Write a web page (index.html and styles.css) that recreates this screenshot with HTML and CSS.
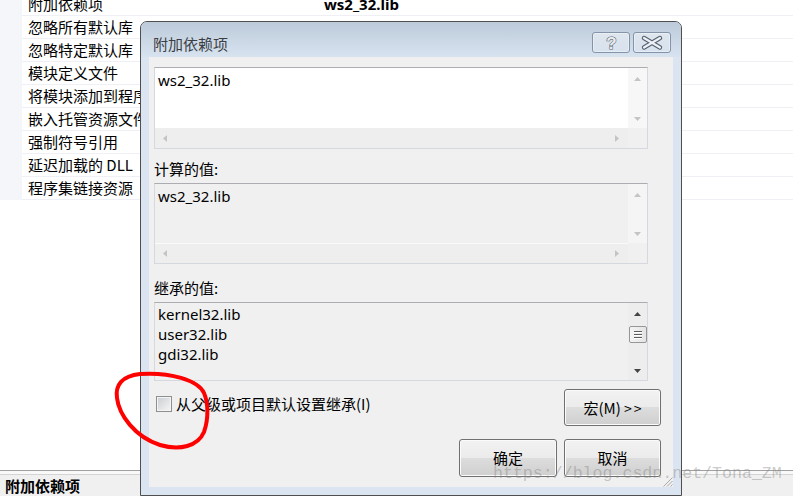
FILE: index.html
```html
<!DOCTYPE html>
<html>
<head>
<meta charset="utf-8">
<link rel="stylesheet" href="styles.css">
</head>
<body>
<div class="page">
  <div class="grid">
    <div class="row"><div class="gutter"></div><div class="name">附加依赖项</div><div class="value strong">ws2_32.lib</div></div>
    <div class="row"><div class="gutter"></div><div class="name">忽略所有默认库</div><div class="value"></div></div>
    <div class="row"><div class="gutter"></div><div class="name">忽略特定默认库</div><div class="value"></div></div>
    <div class="row"><div class="gutter"></div><div class="name">模块定义文件</div><div class="value"></div></div>
    <div class="row"><div class="gutter"></div><div class="name">将模块添加到程序集</div><div class="value"></div></div>
    <div class="row"><div class="gutter"></div><div class="name">嵌入托管资源文件</div><div class="value"></div></div>
    <div class="row"><div class="gutter"></div><div class="name">强制符号引用</div><div class="value"></div></div>
    <div class="row"><div class="gutter"></div><div class="name">延迟加载的 DLL</div><div class="value"></div></div>
    <div class="row"><div class="gutter"></div><div class="name">程序集链接资源</div><div class="value"></div></div>
  </div>
  <div class="blank"></div>
  <div class="footer">
    <div class="footer-sep"></div>
    <div class="footer-title">附加依赖项</div>
  </div>
</div>

<div class="dialog">
  <div class="titlebar">
    <div class="title">附加依赖项</div>
    <div class="tbtns">
      <div class="tbtn">
        <svg width="36" height="19" viewBox="0 0 36 19"><text x="18.5" y="16" text-anchor="middle" font-family="Liberation Sans, sans-serif" font-weight="bold" font-size="17" fill="#e9edf2" stroke="#55606e" stroke-width="1.1" paint-order="stroke">?</text></svg>
      </div>
      <div class="tbtn">
        <svg width="36" height="19" viewBox="0 0 36 19"><path d="M10 5 L26 14.5 M26 5 L10 14.5" stroke="#55606e" stroke-width="4.4" stroke-linecap="round"/><path d="M10 5 L26 14.5 M26 5 L10 14.5" stroke="#eef1f5" stroke-width="2.2" stroke-linecap="round"/></svg>
      </div>
    </div>
  </div>
  <div class="client">
    <div class="box box-edit">
      <div class="content pad2"><div class="line">ws2_32.lib</div></div>
      <div class="vs">
        <svg class="arr" width="7" height="4"><path d="M0 4 L3.5 0 L7 4Z" fill="#c4c4c4"/></svg>
        <svg class="arr" width="7" height="4"><path d="M0 0 L3.5 4 L7 0Z" fill="#c4c4c4"/></svg>
      </div>
      <div class="hs">
        <svg class="arr" width="4" height="7"><path d="M4 0 L0 3.5 L4 7Z" fill="#c4c4c4"/></svg>
        <svg class="arr" width="4" height="7"><path d="M0 0 L4 3.5 L0 7Z" fill="#c4c4c4"/></svg>
      </div>
      <div class="corner"></div>
    </div>

    <div class="label lbl1">计算的值:</div>
    <div class="box box-ro">
      <div class="content pad2"><div class="line">ws2_32.lib</div></div>
      <div class="vs">
        <svg class="arr" width="7" height="4"><path d="M0 4 L3.5 0 L7 4Z" fill="#c4c4c4"/></svg>
        <svg class="arr" width="7" height="4"><path d="M0 0 L3.5 4 L7 0Z" fill="#c4c4c4"/></svg>
      </div>
      <div class="hs hs-ro">
        <svg class="arr" width="4" height="7"><path d="M4 0 L0 3.5 L4 7Z" fill="#c4c4c4"/></svg>
        <svg class="arr" width="4" height="7"><path d="M0 0 L4 3.5 L0 7Z" fill="#c4c4c4"/></svg>
      </div>
      <div class="corner"></div>
    </div>

    <div class="label lbl2">继承的值:</div>
    <div class="box box-list">
      <div class="content pad1">
        <div class="line">kernel32.lib</div>
        <div class="line">user32.lib</div>
        <div class="line">gdi32.lib</div>
      </div>
      <div class="vs vs-list">
        <svg class="arr" width="7" height="4"><path d="M0 4 L3.5 0 L7 4Z" fill="#444"/></svg>
        <div class="thumb"><span></span><span></span><span></span></div>
        <svg class="arr arr-down" width="7" height="4"><path d="M0 0 L3.5 4 L7 0Z" fill="#444"/></svg>
      </div>
    </div>

    <div class="midrow">
      <div class="check"><span class="cbox"></span><span class="ctext">从父级或项目默认设置继承(I)</span></div>
      <div class="btn">宏(M) <span class="gt">&gt;&gt;</span></div>
    </div>
    <div class="btnrow">
      <div class="btn">确定</div>
      <div class="btn">取消</div>
    </div>
    <svg class="grip" width="11" height="11" viewBox="0 0 11 11"><path d="M10.5 1.5 L1.5 10.5 M10.5 5 L5 10.5 M10.5 8.5 L8.5 10.5" stroke="#a8a8a8" stroke-width="1"/></svg>
  </div>
</div>

<svg class="ink" width="793" height="496" viewBox="0 0 793 496"><path d="M204 393 C198 380 170 372 140 374 C122 376 115 385 117 398 C119 415 135 437 160 445 C180 451 198 446 204 432 C209 418 208 402 204 393" fill="none" stroke="#ff0000" stroke-width="4" stroke-linecap="round"/></svg>

<div class="watermark">https://blog.csdn.net/Tona_ZM</div>
</body>
</html>
```

FILE: styles.css
```css
* { box-sizing: border-box; }
html, body { margin: 0; padding: 0; }
body {
  width: 793px;
  height: 496px;
  overflow: hidden;
  position: relative;
  background: #ffffff;
  font-family: "Noto Sans CJK SC", "Noto Sans", sans-serif;
  font-size: 15px;
  color: #000;
}

/* background property page */
.page { height: 496px; display: flex; flex-direction: column; }
.grid { margin-top: -7px; display: flex; flex-direction: column; }
.row { display: flex; height: 23px; }
.gutter { width: 22px; background: #f4f6fa; }
.name {
  width: 298px;
  padding-left: 6px;
  line-height: 22px;
  border-bottom: 1px solid #eef0f5;
  white-space: nowrap;
  overflow: hidden;
}
.value {
  flex: 1;
  padding-left: 4px;
  line-height: 22px;
  border-bottom: 1px solid #eef0f5;
}
.value.strong { font-weight: bold; font-family: "Noto Sans", "Noto Sans CJK SC", sans-serif; }
.blank { flex: 1; }
.footer { height: 26px; border-top: 1px solid #a0a0a0; background: #f0f0f0; }
.footer-sep { height: 4px; background: #f9f9f9; border-bottom: 1px solid #d4d4d4; }
.footer-title { font-weight: bold; padding-left: 5px; line-height: 22px; }

/* dialog window */
.dialog {
  position: absolute;
  left: 140px;
  top: 21px;
  width: 542px;
  height: 475px;
  border: 1px solid #4f4f4f;
  border-radius: 7px 7px 0 0;
  background: #dbe5f1;
  display: flex;
  flex-direction: column;
}
.titlebar {
  height: 35px;
  flex: none;
  background: linear-gradient(#bccad9, #d8e3f0);
  border-radius: 6px 6px 0 0;
  display: flex;
  justify-content: space-between;
  align-items: flex-start;
  padding: 0 10px 0 12px;
}
.title { margin-top: 12px; line-height: 20px; color: #3b3f45; }
.tbtns { display: flex; gap: 3px; margin-top: 10px; }
.tbtn {
  width: 38px;
  height: 21px;
  border: 1px solid #8494a8;
  border-radius: 3px;
  background: linear-gradient(rgba(255,255,255,0.45), rgba(255,255,255,0.12));
  box-shadow: inset 0 0 0 1px rgba(255,255,255,0.35);
  display: flex;
}
.client {
  position: relative;
  flex: none;
  height: 430px;
  margin: 0 8px;
  background: #f0f0f0;
  padding: 10px 12px 10px 5px;
  display: flex;
  flex-direction: column;
}

/* list/edit boxes */
.box {
  margin-right: 13px;
  border: 1px solid #d5d8de;
  border-top-color: #abadb3;
  display: grid;
  grid-template-columns: 1fr 19px;
  grid-template-rows: 1fr 20px;
  font-family: "Noto Sans", "Noto Sans CJK SC", sans-serif;
}
.box-edit { height: 82px; background: #ffffff; }
.box-ro { height: 81px; background: #f0f0f0; margin-top: 4px; }
.box-list { height: 79px; background: #f0f0f0; margin-top: 4px; grid-template-rows: 1fr; }
.content { padding-left: 3px; overflow: hidden; }
.pad2 { padding-top: 2px; }
.pad1 { padding-top: 1px; }
.line { line-height: 20px; height: 20px; white-space: nowrap; }
.vs {
  background: #f5f5f5;
  display: flex;
  flex-direction: column;
  align-items: center;
  justify-content: space-between;
  padding: 9px 0 7px;
}
.box-edit .vs { background: #f7f7f7; }
.hs {
  grid-column: 1;
  background: #eeeeee;
  display: flex;
  align-items: center;
  justify-content: space-between;
  padding: 0 9px 0 8px;
}
.hs-ro { border-top: 1px solid #fafafa; }
.corner { background: #f0f0f0; }
.arr { display: block; flex: none; }
.vs-list { justify-content: flex-start; background: #ededed; }
.thumb {
  margin-top: 10px;
  width: 18px;
  height: 17px;
  border: 1px solid #979797;
  border-radius: 2px;
  background: linear-gradient(to right, #f4f4f4, #e4e4e4);
  display: flex;
  flex-direction: column;
  align-items: center;
  justify-content: center;
  gap: 2px;
}
.thumb span { display: block; width: 8px; height: 1px; background: #5d5d5d; box-shadow: 0 1px 0 #ffffff; }
.arr-down { margin-top: auto; }

.label { line-height: 20px; height: 20px; color: #000; }
.lbl1 { margin-top: 10px; }
.lbl2 { margin-top: 14px; }

/* checkbox + buttons */
.midrow {
  margin-top: 8px;
  display: flex;
  justify-content: space-between;
  align-items: flex-start;
}
.check { display: flex; align-items: center; height: 16px; margin-top: 7px; margin-left: 2px; }
.cbox {
  width: 16px;
  height: 16px;
  border: 1px solid #8e8f8f;
  background: linear-gradient(135deg, #c9cdd2, #f6f6f6);
  box-shadow: inset 0 0 0 1px #f4f4f4;
}
.ctext { margin-left: 4px; line-height: 16px; }
.btn {
  width: 97px;
  height: 37px;
  border: 1px solid #707070;
  border-radius: 3px;
  background: linear-gradient(#f2f2f2 0%, #ebebeb 50%, #dddddd 50%, #cfcfcf 100%);
  box-shadow: inset 0 0 0 1px #fbfbfb;
  display: flex;
  align-items: center;
  justify-content: center;
  font-family: "Noto Sans CJK SC", "Noto Sans", sans-serif;
  line-height: 20px;
  white-space: pre;
}
.gt { letter-spacing: 2px; margin-right: -2px; font-size: 14px; }
.btnrow {
  margin-top: 13px;
  display: flex;
  justify-content: flex-end;
  gap: 7px;
}
.btnrow .btn { width: 98px; height: 38px; }
.btnrow .btn:last-child { width: 97px; }
.grip { position: absolute; right: 0; bottom: 0; }

/* overlays */
.ink { position: absolute; left: 0; top: 0; pointer-events: none; }
.watermark {
  position: absolute;
  left: 493px;
  top: 464px;
  font-family: "Liberation Mono", monospace;
  font-size: 16.6px;
  line-height: 20px;
  color: rgba(130, 130, 130, 0.42);
  white-space: nowrap;
  pointer-events: none;
}
```
